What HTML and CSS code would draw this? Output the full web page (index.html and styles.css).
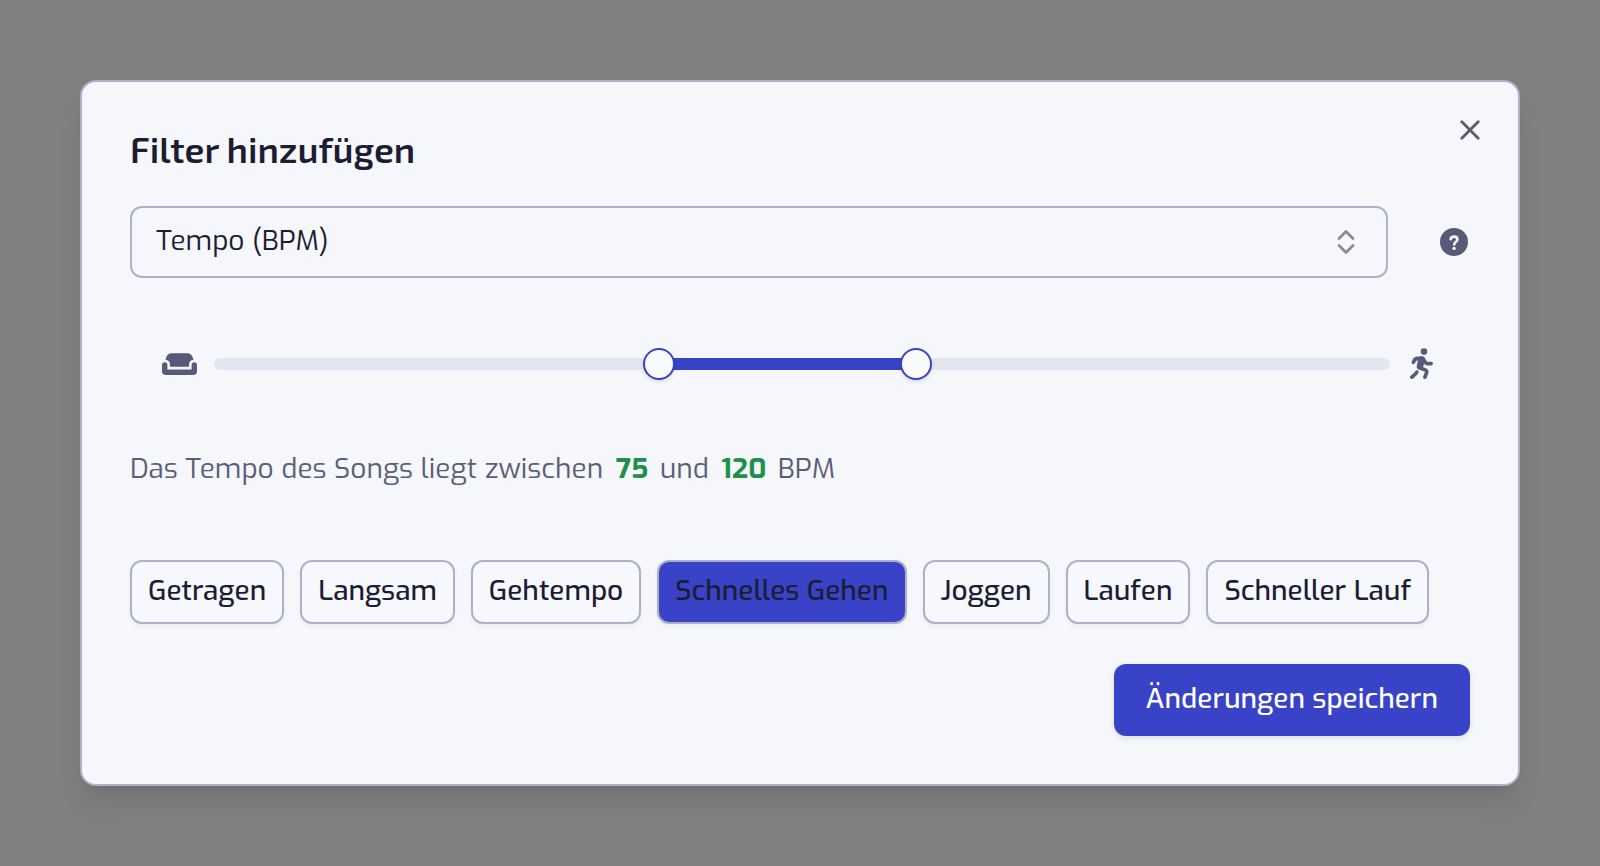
FILE: index.html
```
<!DOCTYPE html>
<html lang="de">
<head>
    <meta charset="UTF-8">
    <meta name="viewport" content="width=device-width, initial-scale=1.0">
    <title>Filter hinzufügen</title>
    <link rel="stylesheet" href="styles.css">
</head>
<body>

    <main class="dialog" role="dialog" aria-labelledby="dialog-title">

        <button class="close" type="button" aria-label="Schließen">
            <svg width="20" height="20" viewBox="0 0 20 20" fill="none" stroke="currentColor" stroke-width="2.8" stroke-linecap="round">
                <path d="M1.8 1.8 18.2 18.2M18.2 1.8 1.8 18.2"/>
            </svg>
        </button>

        <h1 class="title" id="dialog-title">Filter hinzufügen</h1>

        <form class="filter">

            <div class="filter-row">
                <div class="select-box">
                    <select class="select" aria-label="Filter">
                        <option>Tempo (BPM)</option>
                    </select>
                    <svg class="select-icon" width="18" height="26" viewBox="0 0 18 26" fill="none" stroke="currentColor" stroke-width="2.8" stroke-linecap="round" stroke-linejoin="round">
                        <path d="M2 9.4 9 2.6 16 9.4M2 16.6 9 23.4 16 16.6"/>
                    </svg>
                </div>
                <button class="help" type="button" aria-label="Hilfe">
                    <svg width="28" height="28" viewBox="0 0 28 28">
                        <circle cx="14" cy="14" r="14" fill="currentColor"/>
                        <path d="M10.6 11.2C10.9 9.4 12.2 8.6 14 8.6c2 0 3.4 1.1 3.4 2.9 0 2.5-3.2 2.5-3.2 5" fill="none" stroke="#f5f7fb" stroke-width="2.6" stroke-linecap="round"/>
                        <circle cx="14.1" cy="20.4" r="1.7" fill="#f5f7fb"/>
                    </svg>
                </button>
            </div>

            <div class="slider-row">
                <svg width="35" height="22" viewBox="0 0 35 22" fill="currentColor">
                    <path d="M3.6 6.8C4.2 2.8 6.4 0.2 9.6 0.2H25.4C28.6 0.2 30.8 2.8 31.4 6.8 28.6 7.2 27 9 27 11.4V13.8H8V11.4C8 9 6.4 7.2 3.6 6.8Z"/>
                    <path d="M0 11.8C0 10.2 1.1 9.2 2.7 9.2S5.4 10.2 5.4 11.8V16.4H29.6V11.8C29.6 10.2 30.7 9.2 32.3 9.2S35 10.2 35 11.8V18.2C35 20.8 33.6 22 31.2 22H3.8C1.4 22 0 20.8 0 18.2Z"/>
                </svg>
                <div class="slider">
                    <div class="track"></div>
                    <input class="range" type="range" min="0" max="200" value="75" aria-label="Minimum BPM">
                    <input class="range" type="range" min="0" max="200" value="120" aria-label="Maximum BPM">
                </div>
                <svg width="24" height="32" viewBox="0 0 24 32" fill="none" stroke="currentColor" stroke-width="3.6" stroke-linecap="round" stroke-linejoin="round">
                    <circle cx="14" cy="3.6" r="3.3" fill="currentColor" stroke="none"/>
                    <path d="M3.4 14.4C4.2 11.4 5.6 10.4 8 10.4H12.6C14.4 10.4 14.2 15.6 17.4 15.6H21.2"/>
                    <path d="M11.4 11.6 10 18.4" stroke-width="6.6"/>
                    <path d="M10.4 20 15.6 22.2C16.8 22.8 17 23.6 16.6 24.8L14.8 29.2"/>
                    <path d="M6.8 24C6.4 25.6 5 26.4 1.9 29.2"/>
                </svg>
            </div>

            <p class="summary">Das Tempo des Songs liegt zwischen <strong>75</strong> und <strong>120</strong> BPM</p>

            <div class="presets">
                <button class="preset" type="button">Getragen</button>
                <button class="preset" type="button">Langsam</button>
                <button class="preset" type="button">Gehtempo</button>
                <button class="preset active" type="button">Schnelles Gehen</button>
                <button class="preset" type="button">Joggen</button>
                <button class="preset" type="button">Laufen</button>
                <button class="preset" type="button">Schneller Lauf</button>
            </div>

            <button class="save" type="submit">Änderungen speichern</button>

        </form>

    </main>

</body>
</html>
```
FILE: styles.css
```
* {
    box-sizing: border-box;
}
body {
    margin: 0;
    padding: 80px;
    background: #808081;
    color: #1c1d33;
    font-family: Exo, "Exo 2", Roboto, sans-serif;
    font-size: 28px;
    line-height: 36px;
}
button, select {
    font: inherit;
    color: inherit;
    cursor: pointer;
}
svg {
    display: block;
    flex: none;
}
.dialog {
    position: relative;
    padding: 48px;
    background: #f5f7fb;
    border: 2px solid #aeb1c8;
    border-radius: 16px;
    box-shadow: 0 20px 30px -6px rgba(0, 0, 0, 0.1), 0 8px 12px -8px rgba(0, 0, 0, 0.1);
}
.close {
    position: absolute;
    top: 32px;
    right: 32px;
    padding: 6px;
    border: 0;
    background: none;
    color: #5a5b6c;
}
.title {
    margin: 0 0 38px;
    font-family: "Exo 2", Exo, Roboto, sans-serif;
    font-size: 36px;
    line-height: 38px;
    font-weight: 600;
}
.filter {
    display: flex;
    flex-direction: column;
}
.filter-row {
    display: flex;
    align-items: center;
    gap: 52px;
    padding-right: 2px;
}
.select-box {
    position: relative;
    flex: 1;
}
.select {
    display: block;
    width: 100%;
    height: 72px;
    padding: 0 64px 2px 24px;
    appearance: none;
    background: none;
    border: 2px solid #aeb1c8;
    border-radius: 12px;
}
.select-icon {
    position: absolute;
    top: 23px;
    right: 33px;
    color: #8c8d92;
    pointer-events: none;
}
.help {
    padding: 0;
    border: 0;
    background: none;
    color: #585a78;
}
.slider-row {
    display: flex;
    align-items: center;
    gap: 17px;
    margin-top: 70px;
    padding: 0 36px 0 32px;
    color: #585a78;
}
.slider {
    flex: 1;
    display: grid;
    align-items: center;
    margin-right: 3px;
}
.track, .range {
    grid-area: 1 / 1;
}
.track {
    height: 12px;
    border-radius: 6px;
    background: linear-gradient(to right, #e3e6f1 38%, #3843c7 38% 60%, #e3e6f1 60%);
}
.range {
    width: 100%;
    height: 32px;
    margin: 0;
    appearance: none;
    background: none;
    pointer-events: none;
}
.range::-webkit-slider-thumb {
    appearance: none;
    width: 32px;
    height: 32px;
    border: 2px solid #3843c0;
    border-radius: 50%;
    background: #fafbfe;
    box-shadow: 0 2px 4px rgba(0, 0, 0, 0.1);
    pointer-events: auto;
    cursor: pointer;
}
.summary {
    margin: 71px 0 0;
    color: #5c5d79;
}
.summary strong {
    margin: 0 4px 0 5px;
    color: #1f8f4b;
}
.presets {
    display: flex;
    flex-wrap: wrap;
    gap: 16px;
    margin-top: 73px;
}
.preset {
    height: 64px;
    padding: 0 16px 2px;
    border: 2px solid #aeb1c8;
    border-radius: 12px;
    background: #f7f8fd;
    font-weight: 500;
    box-shadow: 0 2px 4px rgba(0, 0, 0, 0.05);
}
.preset.active {
    background: #3843c7;
}
.save {
    align-self: flex-end;
    height: 72px;
    margin-top: 40px;
    padding: 0 32px 2px;
    border: 0;
    border-radius: 12px;
    background: #3843c7;
    color: #fff;
    font-weight: 500;
    box-shadow: 0 2px 6px rgba(0, 0, 0, 0.1);
}
```
